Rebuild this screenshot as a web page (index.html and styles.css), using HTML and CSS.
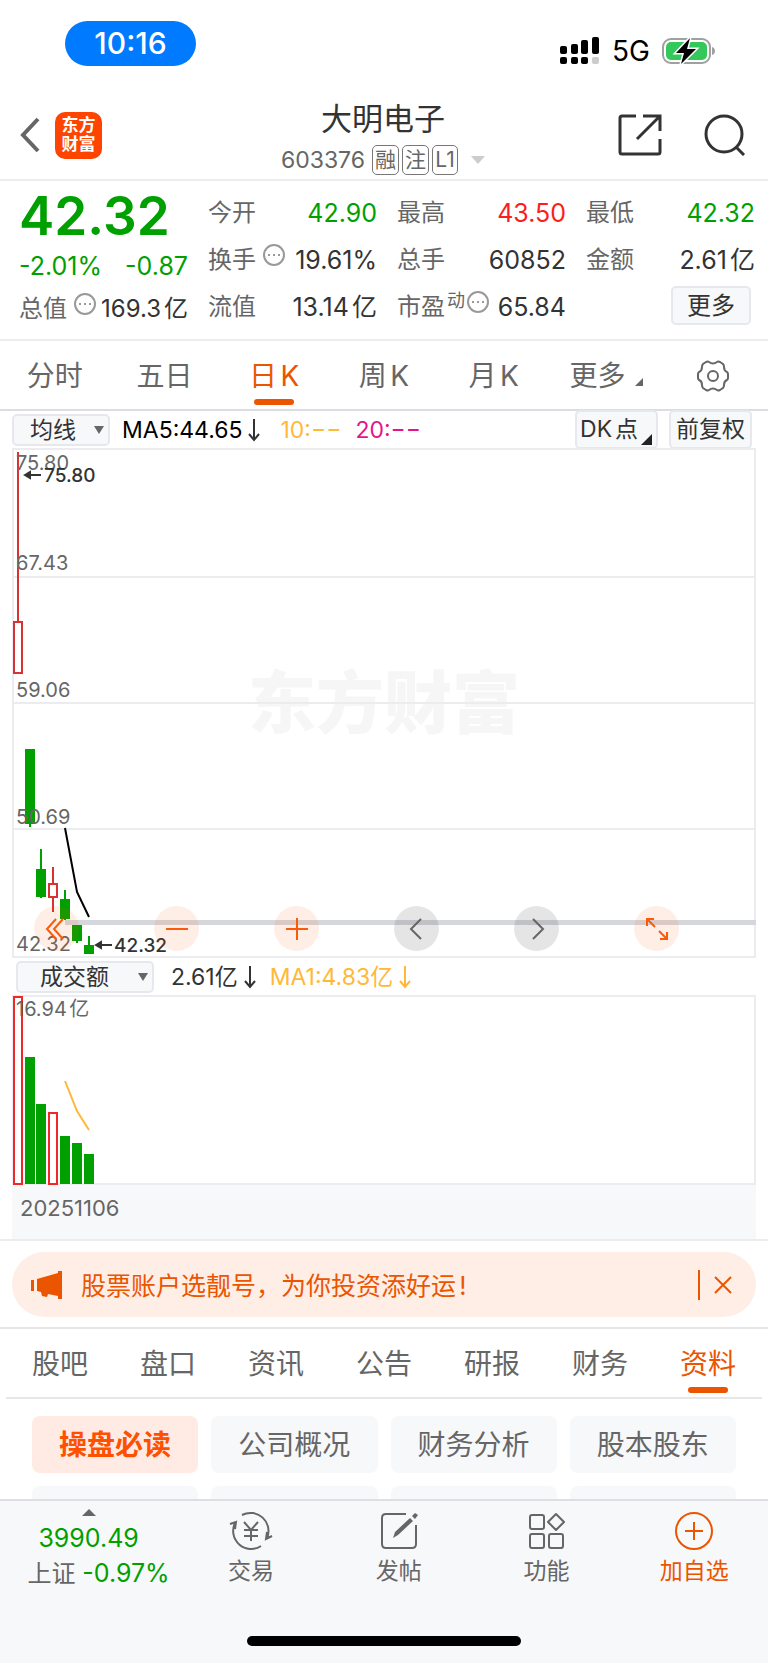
FILE: index.html
```html
<!DOCTYPE html>
<html lang="zh-CN">

<head>
    <meta charset="UTF-8">
    <meta name="viewport" content="width=device-width, initial-scale=1.0">
    <title>大明电子 603376</title>
    <link rel="stylesheet" href="styles.css">
</head>

<body>
    <div class="status-bar">
        <span class="status-time">10:16</span>
        <div class="status-icons">
            <svg width="40" height="28" viewBox="0 0 40 28">
                <rect x="0" y="9" width="7" height="8" rx="2" />
                <rect x="11" y="7" width="7" height="10" rx="2" />
                <rect x="21" y="3" width="7" height="14" rx="2" />
                <rect x="32" y="0" width="7" height="17" rx="2" />
                <rect x="0" y="20" width="7" height="7" rx="2" />
                <rect x="11" y="20" width="7" height="7" rx="2" />
                <rect x="21" y="20" width="7" height="7" rx="2" />
                <rect x="32" y="20" width="7" height="7" rx="2" fill="#ccc" />
            </svg>
            <span class="network">5G</span>
            <svg width="54" height="28" viewBox="0 0 54 28">
                <rect x="1" y="2" width="47" height="24" rx="8" fill="#fff" stroke="#a0a0a0" stroke-width="2" />
                <rect x="4" y="5" width="41" height="18" rx="5" fill="#34c759" />
                <path d="M50 10c4 1 4 7 0 8z" fill="#a0a0a0" />
                <path d="M28 1 14 16h8l-3 11 15-15h-9z" fill="#000" stroke="#fff" stroke-width="3" paint-order="stroke" />
            </svg>
        </div>
    </div>

    <header class="header">
        <div class="header-left">
            <button class="icon-btn" aria-label="返回">
                <svg width="20" height="36" viewBox="0 0 20 36" fill="none" stroke="#666" stroke-width="4">
                    <path d="M18 2 3 18l15 16" />
                </svg>
            </button>
            <a class="logo" href="#">东方<br>财富</a>
        </div>
        <div class="header-title">
            <h1>大明电子</h1>
            <div class="stock-code">
                <span class="code">603376</span>
                <span class="tag">融</span>
                <span class="tag">注</span>
                <span class="tag">L1</span>
                <svg class="code-arrow" width="14" height="8" viewBox="0 0 14 8" fill="#ccc">
                    <path d="M0 0h14L7 8z" />
                </svg>
            </div>
        </div>
        <div class="header-right">
            <button class="icon-btn" aria-label="分享">
                <svg width="44" height="42" viewBox="0 0 44 42" fill="none" stroke="#333" stroke-width="3">
                    <path d="M18 2H4q-2 0-2 2v34q0 2 2 2h36q2 0 2-2V25M25 2h17v15M41 3 19 25" />
                </svg>
            </button>
            <button class="icon-btn" aria-label="搜索">
                <svg width="42" height="42" viewBox="0 0 42 42" fill="none" stroke="#333" stroke-width="3">
                    <circle cx="20" cy="20" r="18" />
                    <path d="m32 33 8 8" />
                </svg>
            </button>
        </div>
    </header>

    <section class="quote">
        <div class="quote-main">
            <div class="price">42.32</div>
            <div class="change"><span>-2.01%</span><span>-0.87</span></div>
            <div class="cell">
                <span class="label">总值</span>
                <svg class="info" width="22" height="22" viewBox="0 0 22 22"><circle cx="11" cy="11" r="10" /><path d="M5 11h2m3 0h2m3 0h2" /></svg>
                <span class="value total">169.3亿</span>
            </div>
        </div>
        <div class="quote-grid">
            <div class="cell"><span class="label">今开</span><span class="value down">42.90</span></div>
            <div class="cell"><span class="label">最高</span><span class="value up">43.50</span></div>
            <div class="cell"><span class="label">最低</span><span class="value down">42.32</span></div>
            <div class="cell">
                <span class="label">换手</span>
                <svg class="info" width="22" height="22" viewBox="0 0 22 22"><circle cx="11" cy="11" r="10" /><path d="M5 11h2m3 0h2m3 0h2" /></svg>
                <span class="value">19.61%</span>
            </div>
            <div class="cell"><span class="label">总手</span><span class="value">60852</span></div>
            <div class="cell"><span class="label">金额</span><span class="value">2.61亿</span></div>
            <div class="cell"><span class="label">流值</span><span class="value">13.14亿</span></div>
            <div class="cell">
                <span class="label">市盈</span><span class="sup">动</span>
                <svg class="info info-tight" width="22" height="22" viewBox="0 0 22 22"><circle cx="11" cy="11" r="10" /><path d="M5 11h2m3 0h2m3 0h2" /></svg>
                <span class="value">65.84</span>
            </div>
            <div class="cell"><button class="more-btn">更多</button></div>
        </div>
    </section>

    <nav class="period-tabs">
        <a href="#">分时</a>
        <a href="#">五日</a>
        <a href="#" class="active">日K</a>
        <a href="#">周K</a>
        <a href="#">月K</a>
        <a href="#" class="has-more">更多</a>
        <button class="icon-btn" aria-label="设置">
            <svg width="34" height="32" viewBox="0 0 34 32" fill="none" stroke="#666" stroke-width="2">
                <path d="M10 2q2-1 3 0 4 3 8 0 1-1 3 0l3 2q1 1 1 3 0 4 3 5 1 1 1 2v4q0 1-1 2-3 1-3 5 0 2-1 3l-3 2q-2 1-3 0-4-3-8 0-1 1-3 0l-3-2q-1-1-1-3 0-4-3-5-1-1-1-2v-4q0-1 1-2 3-1 3-5 0-2 1-3z" />
                <circle cx="17" cy="16" r="5" />
            </svg>
        </button>
    </nav>

    <main>
        <div class="chart-bar">
            <label class="select-box select-ma">
                <select aria-label="主图指标">
                    <option>均线</option>
                    <option>BOLL</option>
                </select>
            </label>
            <span class="ma5">MA5:44.65</span>
            <svg class="arrow-down" width="12" height="24" viewBox="0 0 12 24"><path d="M6 1v20M1 16l5 6 5-6" /></svg>
            <span class="ma10">10:−−</span>
            <span class="ma20">20:−−</span>
            <button class="bar-btn dk-btn">DK点</button>
            <button class="bar-btn">前复权</button>
        </div>

        <div class="chart">
            <svg class="plot" viewBox="0 0 744 510">
                <text x="372" y="280" class="watermark">东方财富</text>
                <g class="grid">
                    <path d="M1 1H743V509H1z" />
                    <path d="M1 129H743M1 255H743M1 381H743" />
                </g>
                <rect x="53" y="472" width="691" height="5" fill="#d5d7dd" />
                <g class="fall">
                    <path d="M18 376v3M29 401v49M53 442v30M65 477v18M77 488v18" />
                    <rect x="13" y="301" width="10" height="75" />
                    <rect x="24" y="421" width="10" height="28" />
                    <rect x="48" y="451" width="10" height="20" />
                    <rect x="60" y="477" width="10" height="16" />
                    <rect x="72" y="497" width="10" height="9" />
                </g>
                <g class="rise">
                    <path d="M6 4v170M41 419v17M41 449v15" />
                    <rect x="2" y="174" width="8" height="51" />
                    <rect x="37" y="436" width="8" height="13" />
                </g>
                <path d="M53 380 65 444 77 469" fill="none" stroke="#000" stroke-width="2" />
                <g class="axis">
                    <text x="4" y="22">75.80</text>
                    <text x="4" y="122">67.43</text>
                    <text x="4" y="249">59.06</text>
                    <text x="4" y="376">50.69</text>
                    <text x="4" y="503">42.32</text>
                </g>
                <g class="mark">
                    <path d="M15 27H29M86 497H100" />
                    <path d="m13 27 5-3v6zM84 497l5-3v6z" />
                    <text x="32" y="34">75.80</text>
                    <text x="102" y="504">42.32</text>
                </g>
            </svg>
            <div class="chart-tools">
                <button class="tool" aria-label="展开"><svg width="24" height="24" viewBox="0 0 24 24"><path d="M11 2 2 12l9 10M18 2 9 12l9 10" /></svg></button>
                <button class="tool" aria-label="缩小"><svg width="24" height="24" viewBox="0 0 24 24"><path d="M1 12h22" /></svg></button>
                <button class="tool" aria-label="放大"><svg width="24" height="24" viewBox="0 0 24 24"><path d="M1 12h22M12 1v22" /></svg></button>
                <button class="tool tool-gray" aria-label="左移"><svg width="24" height="24" viewBox="0 0 24 24"><path d="M16 2 6 12l10 10" /></svg></button>
                <button class="tool tool-gray" aria-label="右移"><svg width="24" height="24" viewBox="0 0 24 24"><path d="m8 2 10 10L8 22" /></svg></button>
                <button class="tool" aria-label="全屏"><svg width="24" height="24" viewBox="0 0 24 24"><path d="M9 2H2v7M2 2l8 8M15 22h7v-7M22 22l-8-8" /></svg></button>
            </div>
        </div>

        <div class="chart-bar volume-bar">
            <label class="select-box select-vol">
                <select aria-label="副图指标">
                    <option>成交额</option>
                    <option>MACD</option>
                </select>
            </label>
            <span>2.61亿</span>
            <svg class="arrow-down" width="12" height="24" viewBox="0 0 12 24"><path d="M6 1v20M1 16l5 6 5-6" /></svg>
            <span class="ma1">MA1:4.83亿</span>
            <svg class="arrow-down ma1" width="12" height="24" viewBox="0 0 12 24"><path d="M6 1v20M1 16l5 6 5-6" /></svg>
        </div>

        <div class="chart">
            <svg class="plot" viewBox="0 0 744 190">
                <path class="grid" d="M1 1H743V189H1z" />
                <g class="fall">
                    <rect x="13" y="62" width="10" height="127" />
                    <rect x="24" y="109" width="10" height="80" />
                    <rect x="48" y="141" width="10" height="48" />
                    <rect x="60" y="148" width="10" height="41" />
                    <rect x="72" y="159" width="10" height="30" />
                </g>
                <g class="rise vivid">
                    <rect x="2" y="2" width="8" height="187" />
                    <rect x="37" y="118" width="8" height="71" />
                </g>
                <path d="M53 86 65 116 77 135" fill="none" stroke="#ffb937" stroke-width="2" />
                <g class="axis"><text x="4" y="21">16.94亿</text></g>
            </svg>
        </div>
        <div class="date-bar">20251106</div>
    </main>

    <div class="notice-wrap">
        <div class="notice">
            <svg width="32" height="28" viewBox="0 0 32 28" fill="#eb5500">
                <path d="M0 9h3v11H0zM6 8 27 2V0h4v28h-4v-3l-10-2-1 3-5-1-1-4-4-1z" />
            </svg>
            <a href="#">股票账户选靓号，为你投资添好运!</a>
            <button class="notice-close" aria-label="关闭">
                <svg width="18" height="18" viewBox="0 0 18 18" fill="none" stroke="#eb5500" stroke-width="2">
                    <path d="m1 1 16 16M17 1 1 17" />
                </svg>
            </button>
        </div>
    </div>

    <nav class="info-tabs">
        <a href="#">股吧</a>
        <a href="#">盘口</a>
        <a href="#">资讯</a>
        <a href="#">公告</a>
        <a href="#">研报</a>
        <a href="#">财务</a>
        <a href="#" class="active">资料</a>
    </nav>

    <div class="chips">
        <button class="chip active">操盘必读</button>
        <button class="chip">公司概况</button>
        <button class="chip">财务分析</button>
        <button class="chip">股本股东</button>
        <span class="chip-peek"></span>
        <span class="chip-peek"></span>
        <span class="chip-peek"></span>
        <span class="chip-peek"></span>
    </div>

    <footer class="footer">
        <div class="footer-nav">
            <a href="#" class="index">
                <svg width="14" height="7" viewBox="0 0 14 7" fill="#666"><path d="M0 7 7 0l7 7z" /></svg>
                <span class="index-value">3990.49</span>
                <span class="index-name">上证 <span class="index-change">-0.97%</span></span>
            </a>
            <a href="#" class="footer-item">
                <svg width="44" height="40" viewBox="0 0 44 40">
                    <path d="M13 4a18 18 0 0 1 25 23M32 35A18 18 0 0 1 6 12M1 13l6-2-1 7M43 25l-6 3 1-7" />
                    <path d="m15 11 7 8 7-8M22 19v11M15 19h14M15 25h14" />
                </svg>
                <span>交易</span>
            </a>
            <a href="#" class="footer-item">
                <svg width="40" height="40" viewBox="0 0 40 40">
                    <path d="M27 3H7Q3 3 3 7v26q0 4 4 4h26q4 0 4-4V14" />
                    <path d="m14 27 2-6L31 7l3 3-15 14zM33 5l3-3 3 2-3 4z" fill="#666" stroke="none" />
                </svg>
                <span>发帖</span>
            </a>
            <a href="#" class="footer-item">
                <svg width="40" height="40" viewBox="0 0 40 40">
                    <rect x="4" y="4" width="14" height="14" rx="2" />
                    <rect x="4" y="23" width="14" height="14" rx="2" />
                    <rect x="23" y="23" width="14" height="14" rx="2" />
                    <path d="m30 3 8 8-8 8-8-8z" stroke-linejoin="round" />
                </svg>
                <span>功能</span>
            </a>
            <a href="#" class="footer-item add">
                <svg width="40" height="40" viewBox="0 0 40 40">
                    <circle cx="20" cy="20" r="18" />
                    <path d="M11 20h18M20 11v18" />
                </svg>
                <span>加自选</span>
            </a>
        </div>
        <div class="home-indicator"></div>
    </footer>
</body>

</html>
```
FILE: styles.css
```css
* {
    box-sizing: border-box;
}

body {
    margin: 0;
    min-height: 100vh;
    display: flex;
    flex-direction: column;
    background: #fff;
    color: #333;
    font-family: Inter, "Noto Sans CJK SC", sans-serif;
    font-size: 24px;
    text-autospace: normal;
}

a {
    color: inherit;
    text-decoration: none;
}

button,
select {
    font: inherit;
    color: inherit;
    padding: 0;
    border: none;
    background: none;
    cursor: pointer;
}

svg {
    display: block;
    flex: none;
}

.up {
    color: #fa1e1e;
}

.down {
    color: #00a000;
}

/* status bar */
.status-bar {
    display: flex;
    justify-content: space-between;
    align-items: flex-start;
    height: 88px;
    padding: 21px 52px 0 65px;
}

.status-time {
    width: 131px;
    border-radius: 23px;
    background: #007aff;
    color: #fff;
    font-size: 30px;
    font-weight: 500;
    line-height: 45px;
    text-align: center;
}

.status-icons {
    display: flex;
    align-items: center;
    gap: 12px;
    padding-top: 16px;
}

.network {
    color: #000;
    font-size: 28px;
    font-weight: 400;
    line-height: 28px;
}

/* header */
.header {
    display: grid;
    grid-template-columns: 1fr auto 1fr;
    align-items: center;
    height: 93px;
    padding: 2px 22px 0 20px;
    border-bottom: 2px solid #ececec;
}

.icon-btn {
    display: flex;
    align-items: center;
    justify-content: center;
}

.header-left {
    display: flex;
    align-items: center;
    gap: 15px;
}

.logo {
    width: 47px;
    height: 47px;
    padding-top: 4px;
    border-radius: 10px;
    background: #ff4400;
    color: #fff;
    font-size: 17px;
    font-weight: 700;
    line-height: 19px;
    text-align: center;
}

.header-title {
    padding-top: 8px;
}

h1 {
    margin: 0;
    font-size: 31px;
    font-weight: 400;
    line-height: 42px;
    text-align: center;
}

.stock-code {
    display: flex;
    align-items: center;
    gap: 3px;
    color: #666;
    font-size: 23px;
    line-height: 40px;
}

.code {
    margin-right: 4px;
}

.tag {
    min-width: 26px;
    padding: 0 2px;
    border: 1px solid #777;
    border-radius: 5px;
    font-size: 21px;
    line-height: 28px;
    text-align: center;
}

.code-arrow {
    margin-left: 10px;
}

.header-right {
    display: flex;
    justify-content: flex-end;
    gap: 42px;
}

/* quote */
.quote {
    display: grid;
    grid-template-columns: calc((100% - 60px) / 4) 1fr;
    column-gap: 20px;
    padding: 8px 13px 9px 19px;
    border-bottom: 2px solid #ececec;
}

.quote-grid {
    display: grid;
    grid-template-columns: repeat(3, 1fr);
    grid-auto-rows: 47px;
    column-gap: 20px;
}

.price {
    color: #00a000;
    font-size: 53px;
    font-weight: 600;
    line-height: 54px;
}

.change {
    display: flex;
    justify-content: space-between;
    color: #00a000;
    font-size: 25px;
    line-height: 46px;
}

.cell {
    display: flex;
    align-items: center;
    line-height: 40px;
    white-space: nowrap;
}

.label {
    color: #666;
}

.value {
    margin-left: auto;
    font-size: 25px;
}

.total {
    font-size: 24px;
}

.sup {
    margin: 0 2px 12px;
    color: #666;
    font-size: 18px;
    line-height: 28px;
}

.info {
    margin: 0 0 10px 7px;
    fill: none;
    stroke: #999;
    stroke-width: 2;
}

.info-tight {
    margin-left: 0;
}

.more-btn {
    width: 80px;
    margin: 0 4px 2px auto;
    border: 2px solid #e6e8ee;
    border-radius: 5px;
    background: #f7f8fa;
    line-height: 35px;
}

/* period tabs */
.period-tabs,
.info-tabs {
    display: grid;
    grid-template-columns: repeat(7, 1fr);
    color: #666;
    font-size: 28px;
    line-height: 66px;
    text-align: center;
}

.period-tabs {
    padding-top: 2px;
    border-bottom: 2px solid #dcdde2;
}

.active {
    color: #eb5500;
}

.period-tabs a,
.info-tabs a {
    position: relative;
}

.period-tabs .active::after,
.info-tabs .active::after {
    content: "";
    position: absolute;
    left: 50%;
    bottom: 4px;
    width: 40px;
    height: 6px;
    margin-left: -20px;
    border-radius: 3px;
    background: #eb5500;
}

.has-more {
    padding-left: 6px;
}

.has-more::after {
    content: "";
    display: inline-block;
    margin-left: 10px;
    border-left: 8px solid transparent;
    border-bottom: 8px solid #666;
}

/* charts */
.chart-bar {
    display: flex;
    align-items: center;
    height: 37px;
    padding: 0 16px 0 12px;
    font-size: 23px;
    line-height: 30px;
    text-autospace: no-autospace;
}

.volume-bar {
    padding-left: 16px;
}

.select-box {
    position: relative;
    border: 2px solid #e6e8ee;
    border-radius: 5px;
    background: #f7f8fa;
}

.select-box::after {
    content: "";
    position: absolute;
    right: 4px;
    top: 10px;
    border: 5px solid transparent;
    border-top: 8px solid #666;
    border-bottom: none;
}

.select-box select {
    display: block;
    width: 100%;
    height: 28px;
    appearance: none;
    line-height: 28px;
}

.select-ma {
    width: 98px;
    margin-right: 12px;
}

.select-ma select {
    padding-left: 16px;
}

.select-vol {
    width: 138px;
    margin-right: 17px;
}

.select-vol select {
    padding-left: 22px;
}

.ma5 {
    color: #000;
}

.ma10 {
    margin: 0 14px 0 6px;
    color: #ffb937;
}

.ma1 {
    color: #ffb937;
}

.ma20 {
    margin-right: auto;
    color: #e6148c;
}

.arrow-down {
    margin: 0 14px 0 6px;
    fill: none;
    stroke: currentColor;
    stroke-width: 2;
}

.bar-btn {
    position: relative;
    width: 83px;
    margin-left: 11px;
    border: 2px solid #e6e8ee;
    border-radius: 5px;
    background: #f7f8fa;
    line-height: 35px;
}

.dk-btn {
    padding-right: 15px;
    text-autospace: normal;
}

.dk-btn::after {
    content: "";
    position: absolute;
    right: 4px;
    bottom: 2px;
    border-left: 11px solid transparent;
    border-bottom: 11px solid #222;
}

.chart {
    position: relative;
    margin: 0 12px;
}

.plot {
    width: 100%;
    height: auto;
}

.grid {
    fill: none;
    stroke: #ebecf0;
    stroke-width: 2;
}

.watermark {
    fill: #f6f6f6;
    font-size: 68px;
    font-weight: 900;
    text-anchor: middle;
}

.fall {
    fill: #00a000;
    stroke: #00a000;
    stroke-width: 2;
}

.fall rect {
    stroke: none;
}

.rise {
    fill: #fff;
    stroke: #d93232;
    stroke-width: 2;
}

.vivid {
    stroke: #f02828;
}

.axis {
    fill: #666;
    font-size: 20px;
}

.mark {
    fill: #333;
    stroke: none;
    font-size: 19px;
    font-weight: 500;
}

.mark path {
    stroke: #333;
    stroke-width: 2;
}

.chart-tools {
    position: absolute;
    left: 22px;
    right: 77px;
    bottom: 7px;
    display: flex;
    justify-content: space-between;
}

.tool {
    display: flex;
    align-items: center;
    justify-content: center;
    width: 45px;
    height: 45px;
    border-radius: 50%;
    background: rgba(255, 85, 0, 0.1);
}

.tool svg {
    fill: none;
    stroke: #fa5a0a;
    stroke-width: 2;
}

.tool-gray {
    background: rgba(0, 0, 0, 0.1);
}

.tool-gray svg {
    stroke: #666;
}

.date-bar {
    margin: 0 12px;
    padding: 0 8px 8px;
    background: #f7f8fa;
    color: #666;
    font-size: 22px;
    line-height: 46px;
}

/* notice */
.notice-wrap {
    padding: 11px 12px 10px;
    border-top: 2px solid #ececee;
    border-bottom: 2px solid #e6e6e6;
}

.notice {
    display: flex;
    align-items: center;
    gap: 18px;
    height: 65px;
    padding: 0 24px 0 19px;
    border-radius: 33px;
    background: #feeee6;
    color: #eb5500;
    font-size: 25px;
    line-height: 40px;
}

.notice a {
    padding-top: 2px;
}

.notice-close {
    margin-left: auto;
    padding: 6px 0 6px 14px;
    border-left: 2px solid #eb5500;
}

/* info tabs */
.info-tabs {
    margin: 0 6px;
    padding-top: 2px;
    border-bottom: 2px solid #e6e6e6;
}

.chips {
    display: grid;
    grid-template-columns: repeat(4, 1fr);
    gap: 13px;
    padding: 17px 32px 0;
}

.chip {
    padding-top: 1px;
    border-radius: 8px;
    background: #f7f8fa;
    color: #666;
    font-size: 28px;
    line-height: 56px;
}

.chip.active {
    background: #ffebe3;
    color: #ff5000;
    font-weight: 700;
}

.chip-peek {
    height: 13px;
    border-radius: 8px 8px 0 0;
    background: #f7f8fa;
}

/* footer */
.footer {
    flex: 1;
    display: flex;
    flex-direction: column;
    justify-content: space-between;
    align-items: center;
    padding-bottom: 17px;
    border-top: 2px solid #dedfe3;
    background: #f7f8fa;
    color: #666;
}

.footer-nav {
    display: grid;
    grid-template-columns: 6fr 5fr 5fr 5fr 5fr;
    width: 100%;
    padding-top: 8px;
}

.index {
    display: flex;
    flex-direction: column;
    align-items: center;
    line-height: 35px;
}

.index svg {
    margin-bottom: 5px;
}

.index-value,
.index-change {
    color: #00a000;
    font-size: 25px;
}

.index-name {
    padding-left: 20px;
}

.footer-item {
    display: flex;
    flex-direction: column;
    align-items: center;
    font-size: 23px;
    line-height: 40px;
}

.footer-item svg {
    margin-top: 2px;
    fill: none;
    stroke: currentColor;
    stroke-width: 2;
}

.add {
    color: #eb5500;
}

.home-indicator {
    width: 274px;
    height: 10px;
    border-radius: 5px;
    background: #000;
}
```
